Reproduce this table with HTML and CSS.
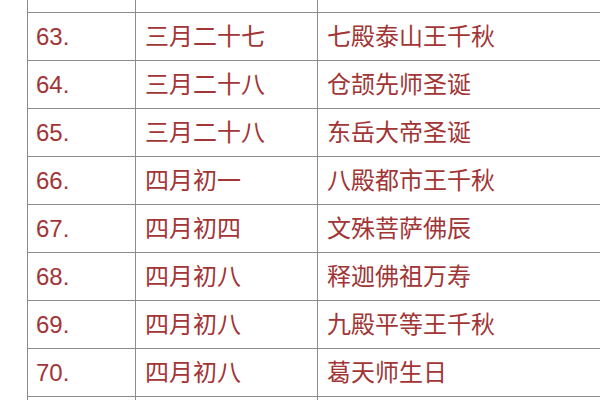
FILE: index.html
```html
<!DOCTYPE html>
<html lang="zh">
<head>
<meta charset="utf-8">
<link rel="stylesheet" href="styles.css">
</head>
<body>
<div class="viewport">
<table class="festivals">
<colgroup><col class="c-num"><col class="c-date"><col class="c-name"></colgroup>
<tbody>
<tr><td class="num">62.</td><td>三月二十六</td><td>鬼谷先师千秋</td></tr>
<tr><td class="num">63.</td><td>三月二十七</td><td>七殿泰山王千秋</td></tr>
<tr><td class="num">64.</td><td>三月二十八</td><td>仓颉先师圣诞</td></tr>
<tr><td class="num">65.</td><td>三月二十八</td><td>东岳大帝圣诞</td></tr>
<tr><td class="num">66.</td><td>四月初一</td><td>八殿都市王千秋</td></tr>
<tr><td class="num">67.</td><td>四月初四</td><td>文殊菩萨佛辰</td></tr>
<tr><td class="num">68.</td><td>四月初八</td><td>释迦佛祖万寿</td></tr>
<tr><td class="num">69.</td><td>四月初八</td><td>九殿平等王千秋</td></tr>
<tr><td class="num">70.</td><td>四月初八</td><td>葛天师生日</td></tr>
<tr><td class="num">71.</td><td>四月初八</td><td>浴佛节</td></tr>
</tbody>
</table>
</div>
</body>
</html>
```
FILE: styles.css
```css
html, body {
  margin: 0;
  padding: 0;
  background: #ffffff;
}
.viewport {
  width: 600px;
  height: 400px;
  overflow: hidden;
}
.festivals {
  border-collapse: collapse;
  table-layout: fixed;
  width: 640px;
  margin-left: 27px;
  margin-top: -36px;
  font-family: "Liberation Sans", "Noto Sans CJK SC", sans-serif;
  font-size: 24px;
  color: #a23535;
}
.c-num { width: 108px; }
.c-date { width: 182px; }
.festivals td {
  border: 1px solid #8c8c8c;
  height: 48px;
  padding: 0 0 0 9px;
  box-sizing: border-box;
  vertical-align: middle;
  line-height: 30px;
  white-space: nowrap;
}
.festivals td.num {
  padding-left: 8px;
}
```
